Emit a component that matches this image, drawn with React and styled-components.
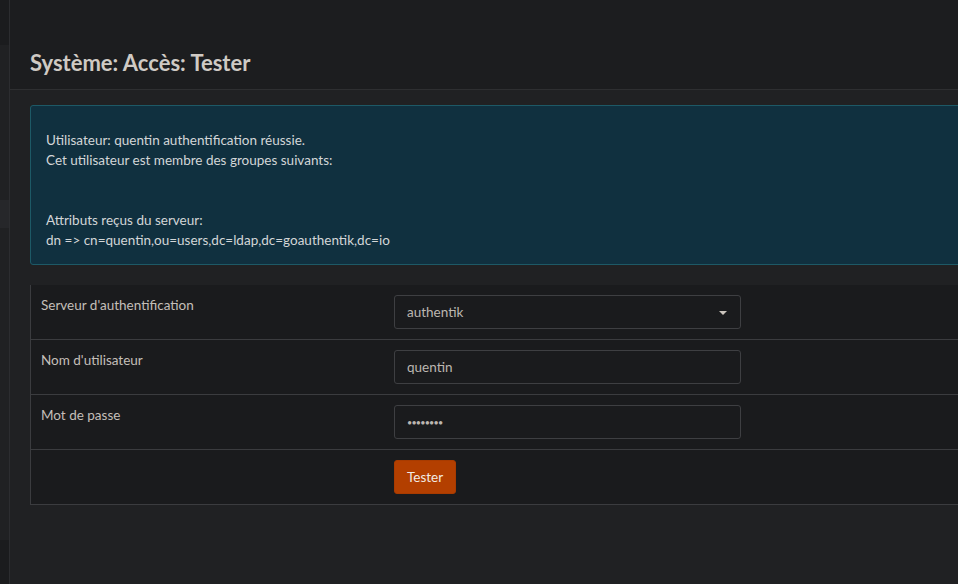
import React from "react";
import styled, { createGlobalStyle } from "styled-components";

const GlobalStyle = createGlobalStyle`
  html, body {
    margin: 0;
    padding: 0;
    background: #202123;
    overflow: hidden;
  }
  body {
    font-family: "Lato", "Noto Sans", sans-serif;
    font-size: 14px;
    color: #c9c4be;
  }
`;

const Page = styled.div`
  display: flex;
  width: 958px;
  height: 584px;
  overflow: hidden;
  background: #202123;
`;

const Sidebar = styled.div`
  flex: 0 0 9px;
  display: flex;
  flex-direction: column;
  border-right: 1px solid #2c2d30;
  background: #202123;
`;

const SideBlock = styled.div`
  height: ${({ h }) => h}px;
  flex: ${({ grow }) => (grow ? 1 : "none")};
  background: ${({ tone }) => tone};
`;

const Main = styled.div`
  flex: 1;
  display: flex;
  flex-direction: column;
  min-width: 0;
`;

const Header = styled.div`
  height: 90px;
  box-sizing: border-box;
  padding: 0 20px 13px;
  display: flex;
  align-items: flex-end;
  background: #1c1d1f;
  border-bottom: 1px solid #2e2f31;
`;

const Title = styled.h1`
  margin: 0;
  font-size: 22px;
  font-weight: 700;
  color: #cfcac4;
`;

const Content = styled.div`
  padding: 15px 0 0 20px;
  display: flex;
  flex-direction: column;
  gap: 20px;
  width: 1300px;
`;

const Alert = styled.div`
  background: #10303f;
  border: 1px solid #1d5966;
  border-radius: 3px;
  padding: 24px 15px 14px;
  line-height: 20px;
  font-size: 13.5px;
  color: #d3d6d8;
`;

const Line = styled.div`
  min-height: 20px;
`;

const Table = styled.div`
  background: #1a1b1d;
  border-left: 1px solid #3b3c3f;
  border-bottom: 1px solid #3b3c3f;
`;

const Row = styled.div`
  display: grid;
  grid-template-columns: 353px 1fr;
  height: 54px;
  border-top: ${({ first }) => (first ? "none" : "1px solid #3b3c3f")};
`;

const Label = styled.div`
  padding: 12px 10px;
  font-size: 13.5px;
  line-height: 16px;
  color: #c4bfb9;
`;

const Cell = styled.div`
  padding: 10px;
`;

const Field = styled.div`
  position: relative;
  width: 347px;
  height: 34px;
  box-sizing: border-box;
  border: 1px solid #3e3f42;
  border-radius: 3px;
  background: #1a1b1d;
  padding: 0 12px;
  display: flex;
  align-items: center;
  font-size: 13.5px;
  color: #bcb7b1;
`;

const Caret = styled.span`
  position: absolute;
  right: 13px;
  top: 15px;
  width: 0;
  height: 0;
  border-left: 4px solid transparent;
  border-right: 4px solid transparent;
  border-top: 4px solid #cbc5be;
`;

const Dots = styled.span`
  font-size: 9px;
  letter-spacing: -0.8px;
`;

const Button = styled.button`
  height: 34px;
  padding: 0 12px;
  border: 1px solid #a83b00;
  border-radius: 3px;
  background: #b33f00;
  color: #f2ebe4;
  font-family: inherit;
  font-size: 13.5px;
`;

const fields = [
  { label: "Serveur d'authentification", value: "authentik", select: true },
  { label: "Nom d'utilisateur", value: "quentin" },
  { label: "Mot de passe", value: "••••••••", password: true },
];

export default function App() {
  return (
    <>
      <GlobalStyle />
      <Page>
        <Sidebar>
          <SideBlock h={45} tone="#1b1c1e" />
          <SideBlock h={155} tone="#202123" />
          <SideBlock h={28} tone="#26272a" />
          <SideBlock grow tone="#202123" />
          <SideBlock h={44} tone="#1b1c1e" />
        </Sidebar>
        <Main>
          <Header>
            <Title>Système: Accès: Tester</Title>
          </Header>
          <Content>
            <Alert>
              <Line>Utilisateur: quentin authentification réussie.</Line>
              <Line>Cet utilisateur est membre des groupes suivants:</Line>
              <Line />
              <Line />
              <Line>Attributs reçus du serveur:</Line>
              <Line>dn =&gt; cn=quentin,ou=users,dc=ldap,dc=goauthentik,dc=io</Line>
            </Alert>
            <Table>
              {fields.map((f, i) => (
                <Row key={f.label} first={i === 0}>
                  <Label>{f.label}</Label>
                  <Cell>
                    <Field>
                      {f.password ? <Dots>{f.value}</Dots> : f.value}
                      {f.select && <Caret />}
                    </Field>
                  </Cell>
                </Row>
              ))}
              <Row>
                <Label />
                <Cell>
                  <Button>Tester</Button>
                </Cell>
              </Row>
            </Table>
          </Content>
        </Main>
      </Page>
    </>
  );
}
